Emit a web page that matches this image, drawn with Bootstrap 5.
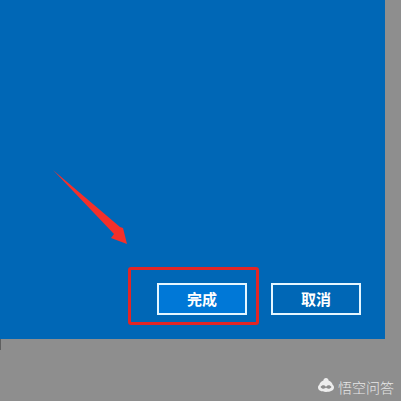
<!DOCTYPE html>
<html lang="zh">
<head>
<meta charset="utf-8">
<title>完成</title>
<link href="https://cdn.jsdelivr.net/npm/bootstrap@5.3.0/dist/css/bootstrap.min.css" rel="stylesheet">
<style>
html,body{margin:0;width:401px;height:401px;overflow:hidden;background:#8e8e8e;font-family:"Liberation Sans","Noto Sans CJK SC",sans-serif}
.stage{position:relative;width:401px;height:401px}
.panel{width:385px;height:339px;background:#0067b6;padding:0 24px 24px 0}
.wbtn{width:90px;height:32px;padding:0;border:2px solid #e4f6ff;border-radius:0;background:transparent;color:#fff;font-size:15px;font-weight:700;line-height:28px;font-family:"Noto Sans CJK SC",sans-serif}
.wbtn-on{background:#0078d7}
.gap-24{gap:24px}
.redbox{position:absolute;left:128px;top:267px;width:131px;height:58px;border:3px solid #e22525;border-radius:3px}
.arrow{position:absolute;left:0;top:0}
.foot{height:62px;padding:0 7px 5px 0;gap:4px;color:#e8e8e8;font-size:14px;line-height:18px;font-family:"Noto Sans CJK SC",sans-serif;font-weight:300}
.sliver{position:absolute;left:0;top:339px;width:1px;height:11px;background:#5f5f5f}
</style>
</head>
<body>
<div class="stage">
  <div class="panel d-flex justify-content-end align-items-end gap-24">
    <button type="button" class="btn wbtn wbtn-on">完成</button>
    <button type="button" class="btn wbtn">取消</button>
  </div>
  <div class="foot d-flex justify-content-end align-items-end">
    <svg width="16" height="14" viewBox="0 0 16 14" class="mb-1"><path d="M8 0 C9.5 0 10.5 1.2 10.6 2.6 C12.8 3.4 14.2 5 14.8 7 C15.8 7.6 16 8.6 16 9.6 C16 12.6 12.5 14 8 14 C3.5 14 0 12.6 0 9.6 C0 8.6 .2 7.6 1.2 7 C1.8 5 3.2 3.4 5.4 2.6 C5.5 1.2 6.5 0 8 0Z" fill="#eee"/><path d="M2.5 9 C4 6.5 7 7 8 9 C9 7 12 6.5 13.5 9 C12 11.5 9 11 8 9.6 C7 11 4 11.5 2.5 9Z" fill="#8e8e8e"/></svg>
    <span>悟空问答</span>
  </div>
  <div class="sliver"></div>
  <svg class="arrow" width="401" height="401" viewBox="0 0 401 401"><polygon points="53,170 120,227 123,228 127,244 111,238 114,234" fill="#f5302a"/></svg>
  <div class="redbox"></div>
</div>
<script src="https://cdn.jsdelivr.net/npm/bootstrap@5.3.0/dist/js/bootstrap.bundle.min.js"></script>
</body>
</html>
